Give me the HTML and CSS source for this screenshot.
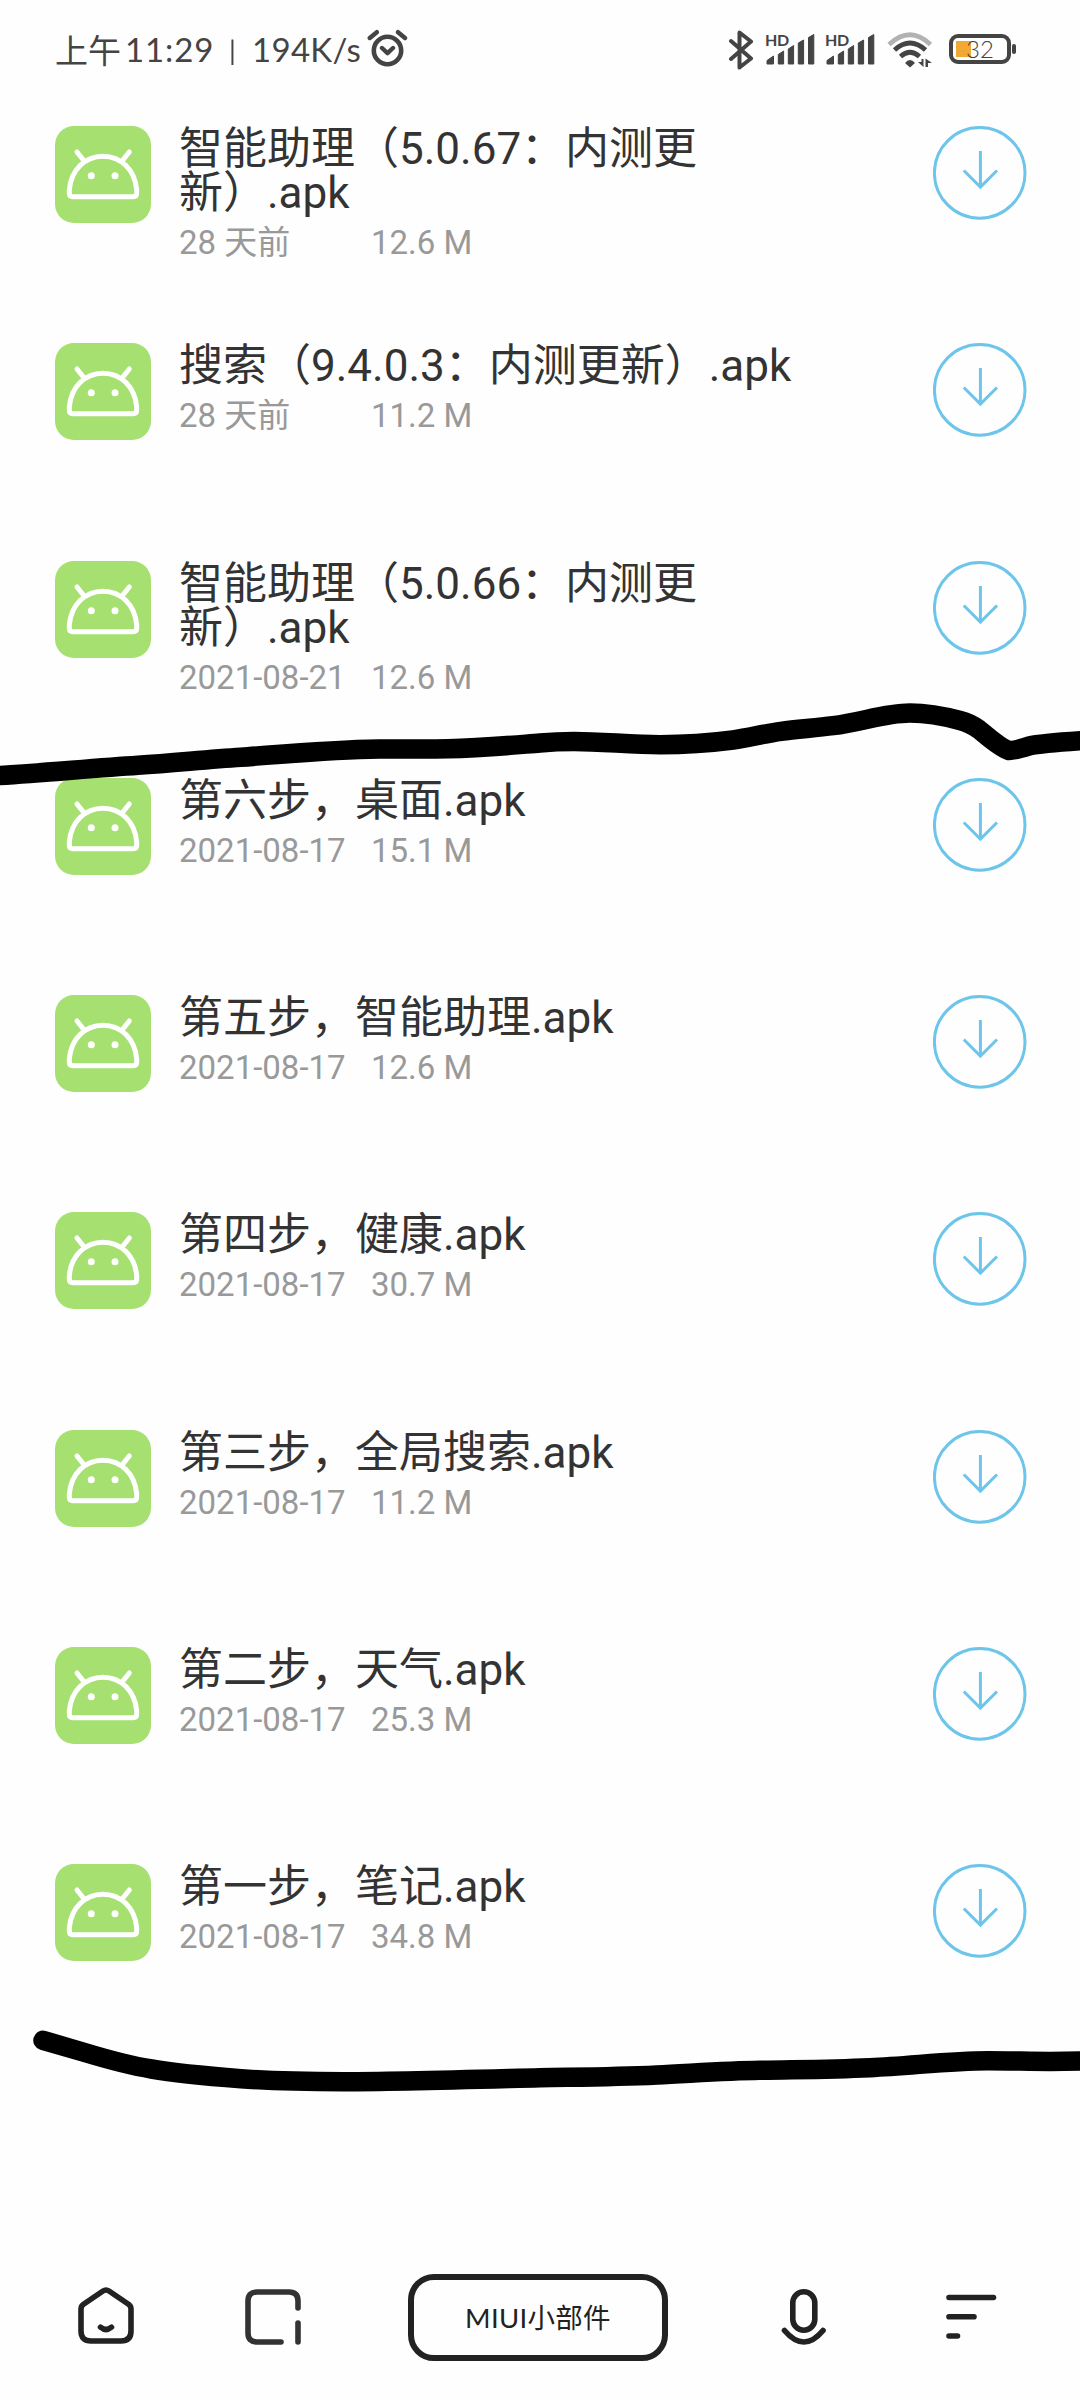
FILE: index.html
```html
<!DOCTYPE html>
<html lang="zh-CN">
<head>
<meta charset="utf-8">
<title>文件列表</title>
<link rel="stylesheet" href="styles.css">
</head>
<body>
<svg class="defs" width="0" height="0">
  <symbol id="android" viewBox="0 0 96 97">
    <path d="M14.300 64C16 44 30 30.200 48 30.200S80 44 81.700 64v3q0 3.700-3.700 3.700H18q-3.700 0-3.700-3.700zM22 26l7.200 9M74.300 26l-7.200 9" fill="none" stroke="#fff" stroke-width="5" stroke-linecap="round"/>
    <circle cx="36.300" cy="49.700" r="3.500" fill="#fff"/><circle cx="60" cy="49.700" r="3.500" fill="#fff"/>
  </symbol>
  <symbol id="download" viewBox="0 0 94 94">
    <circle cx="46.700" cy="46.900" r="45.300"/><path d="M47.400 25v36.500M30.800 44.500l16.600 16.600 16.600-16.600"/>
  </symbol>
  <symbol id="signal" viewBox="0 0 50 32">
    <path d="M2 31V27.500L8.500 23V31zM13.300 31V21.500L18.600 18V31zM23.300 31V16L28.600 12.500V31zM33.300 31V10L38.600 7V31zM43.500 31V4.500L48.800 1.500V31z" stroke-width="1" stroke="#444" stroke-linejoin="round" fill="#444"/>
  </symbol>
</svg>

<div class="screen">
  <header class="status">
    <div class="clock"><span class="ampm">上午</span><span class="time">11:29</span><span class="bar">|</span><span class="speed">194K/s</span>
      <svg class="alarm" width="41" height="38" viewBox="0 0 41 38"><circle cx="20.500" cy="21.500" r="13.700" fill="none" stroke="#444" stroke-width="4.600"/><path d="M15 19l5.500 5.200L26 19M2.800 9l7-5.800M31 3.200l7 5.800" fill="none" stroke="#444" stroke-width="4.400" stroke-linecap="round" stroke-linejoin="round"/></svg>
    </div>
    <div class="indicators">
      <svg class="bluetooth" width="26" height="40" viewBox="0 0 26 40"><path d="M3 11l20 17.500-11.500 9V2.500l11.500 9L3 29" fill="none" stroke="#444" stroke-width="4" stroke-linecap="round" stroke-linejoin="round"/></svg>
      <div class="sim"><span class="hd">HD</span><svg width="50" height="32"><use href="#signal"/></svg></div>
      <div class="sim"><span class="hd">HD</span><svg width="50" height="32"><use href="#signal"/></svg></div>
      <svg class="wifi" width="48" height="38" viewBox="0 0 48 38" fill="none">
        <path d="M3 13.500Q24-6 44.500 13.500" stroke="#b2b2b2" stroke-width="4.600"/>
        <path d="M8.500 19Q24 5 39.500 19M14.500 25.500Q24 17 33.500 25.500" stroke="#444" stroke-width="4.800"/>
        <path d="M19 32q5-6 10 0l-5 4.500zM32 31h3.500v-3h2V36zM39.500 36v-8.500l6.500 4.500h-4v4z" fill="#444"/>
      </svg>
      <div class="battery"><span>32</span></div>
    </div>
  </header>

  <main class="files">
    <article class="file"><svg class="thumb"><use href="#android"/></svg><div class="info"><h2>智能助理（5.0.67：内测更<br>新）.apk</h2><p><span>28 天前</span><span>12.6 M</span></p></div><svg class="get"><use href="#download"/></svg></article>
    <article class="file"><svg class="thumb"><use href="#android"/></svg><div class="info"><h2>搜索（9.4.0.3：内测更新）.apk</h2><p><span>28 天前</span><span>11.2 M</span></p></div><svg class="get"><use href="#download"/></svg></article>
    <article class="file"><svg class="thumb"><use href="#android"/></svg><div class="info"><h2>智能助理（5.0.66：内测更<br>新）.apk</h2><p><span>2021-08-21</span><span>12.6 M</span></p></div><svg class="get"><use href="#download"/></svg></article>
    <article class="file"><svg class="thumb"><use href="#android"/></svg><div class="info"><h2>第六步，桌面.apk</h2><p><span>2021-08-17</span><span>15.1 M</span></p></div><svg class="get"><use href="#download"/></svg></article>
    <article class="file"><svg class="thumb"><use href="#android"/></svg><div class="info"><h2>第五步，智能助理.apk</h2><p><span>2021-08-17</span><span>12.6 M</span></p></div><svg class="get"><use href="#download"/></svg></article>
    <article class="file"><svg class="thumb"><use href="#android"/></svg><div class="info"><h2>第四步，健康.apk</h2><p><span>2021-08-17</span><span>30.7 M</span></p></div><svg class="get"><use href="#download"/></svg></article>
    <article class="file"><svg class="thumb"><use href="#android"/></svg><div class="info"><h2>第三步，全局搜索.apk</h2><p><span>2021-08-17</span><span>11.2 M</span></p></div><svg class="get"><use href="#download"/></svg></article>
    <article class="file"><svg class="thumb"><use href="#android"/></svg><div class="info"><h2>第二步，天气.apk</h2><p><span>2021-08-17</span><span>25.3 M</span></p></div><svg class="get"><use href="#download"/></svg></article>
    <article class="file"><svg class="thumb"><use href="#android"/></svg><div class="info"><h2>第一步，笔记.apk</h2><p><span>2021-08-17</span><span>34.8 M</span></p></div><svg class="get"><use href="#download"/></svg></article>
  </main>

  <nav class="toolbar">
    <svg class="home" width="56" height="58" viewBox="0 0 56 58"><path d="M3 22q0-3 2.500-4.800L25 4q3-2 6 0l19.500 13.200Q53 19 53 22v22q0 10-10 10H13Q3 54 3 44zM22.500 40.200q5.500 4.600 11 0" fill="none" stroke="#222" stroke-width="5.600" stroke-linecap="round" stroke-linejoin="round"/></svg>
    <svg class="tabs" width="56" height="56" viewBox="0 0 56 56"><path d="M36 53H12q-9 0-9-9V12q0-9 9-9h32q9 0 9 9v7M53 34v19" fill="none" stroke="#333" stroke-width="5.600" stroke-linecap="round"/></svg>
    <button class="query">MIUI小部件</button>
    <svg class="mic" width="46" height="56" viewBox="0 0 46 56"><rect x="11.800" y="2.800" width="22" height="38.500" rx="11" fill="none" stroke="#222" stroke-width="5.600"/><path d="M3.500 41.500q19.500 23 38.500 0" fill="none" stroke="#222" stroke-width="5.600" stroke-linecap="round"/></svg>
    <svg class="menu" width="51" height="46" viewBox="0 0 51 46"><path d="M3 3.500h44.500M3 22.800h25M3 42h8.500" fill="none" stroke="#222" stroke-width="5.600" stroke-linecap="round"/></svg>
  </nav>

  <svg class="strokes" width="1080" height="2400" viewBox="0 0 1080 2400">
    <path d="M-12 776.300C30 774 90 768.500 138 765.300C175 763 205 759.500 241 757.300C285 754 330 749.700 379 749C402 748.700 425 749.300 448 748.700C485 748 520 744.500 540 743C551 742 562 741.500 574 741.500C603 741.500 630 744.700 660 744.700C685 744.700 710 743 733 740C750 737.500 765 733.500 781 731.300C798 729 816 728 833 725.700C862 722 885 713 910 713C928 713 947 717 960 720.500Q970 723 979 729.500C987 736 1000 748 1009 750.500Q1013 751 1029 746Q1042 743 1092 740"/>
    <path d="M43 2040.300L83 2052Q126 2065 151.500 2069Q180 2074 241 2078.700Q280 2081.700 344 2081.700C395 2081.700 470 2079.500 540 2077.700C585 2077 615 2077 657 2075C690 2073.500 725 2070.900 760 2070.300C800 2069.500 830 2069.500 870 2067.700C910 2066 950 2060.700 988 2060.700C1010 2060.700 1030 2061.500 1050 2061.500L1092 2060.700"/>
  </svg>
</div>
</body>
</html>
```
FILE: styles.css
```css
* { box-sizing: border-box; }
body { margin: 0; background: #fefefe; font-family: Roboto, "Noto Sans CJK SC", sans-serif; }
.defs { position: absolute; }
.screen { position: relative; width: 1080px; height: 2400px; overflow: hidden; display: flex; flex-direction: column; }

.status { height: 126px; padding: 27px 63px 0 55px; display: flex; justify-content: space-between; align-items: flex-start; color: #444; }
.clock { display: flex; align-items: center; height: 44px; font-family: Lato, "Noto Sans CJK SC", sans-serif; font-size: 33px; white-space: nowrap; }
.ampm { width: 70px; font-weight: 400; font-size: 33px; }
.time { width: 104px; letter-spacing: .9px; }
.bar { width: 23px; font-size: 27px; }
.speed { width: 115px; letter-spacing: .3px; }
.alarm { margin: -2px 0 0 0; }
.indicators { display: flex; align-items: flex-start; }
.bluetooth { margin: 3px 11px 0 0; }
.sim { display: grid; width: 60px; padding-top: 6px; }
.sim > * { grid-area: 1 / 1; }
.hd { font: 700 16px/14px Lato, sans-serif; letter-spacing: -.4px; }
.wifi { margin: 4px 15px 0 1px; }
.battery { position: relative; width: 62px; height: 30px; margin: 7px 6px 0 0; border: 4.500px solid #444; border-radius: 9px; color: #444; font: 300 24px/22px Lato, sans-serif; background: linear-gradient(#f2a933, #f2a933) 2.500px center / 15px 16px no-repeat; padding-left: 13px; }
.battery::after { content: ""; position: absolute; left: 59px; top: 6px; width: 4px; height: 10px; background: #444; border-radius: 2px; }

.files { flex: 1; display: flex; flex-direction: column; }
.file { height: 217.25px; padding: 0 53px 0 55px; display: flex; align-items: flex-start; }
.thumb { width: 96px; height: 97px; border-radius: 19px; background: #a5e070; flex: none; }
.info { flex: 1; padding: 1px 0 0 28px; }
.info h2 { margin: 0; font-size: 44px; line-height: 44px; font-weight: 400; color: #333; white-space: nowrap; }
.info p { margin: 0; padding-top: 3px; display: flex; font-size: 33px; line-height: 50px; color: #999; }
.info p span:first-child { width: 192px; }
.get { width: 94px; height: 94px; flex: none; fill: none; stroke: #6dc5ea; stroke-width: 3; }

.toolbar { height: 160px; padding: 34px 83px 0 78px; display: flex; align-items: flex-start; }
.home { margin-top: 13px; }
.tabs { margin: 15px 0 0 111px; }
.query { width: 260px; height: 87px; margin-left: 107px; padding: 0; border: 6px solid #222; border-radius: 26px; background: none; color: #222; font: 400 27.500px/1 Lato, "Noto Sans CJK SC", sans-serif; letter-spacing: .3px; }
.mic { margin: 15px 0 0 113px; }
.menu { margin: 20px 0 0 119px; }

.strokes { position: absolute; inset: 0; fill: none; stroke: #000; stroke-width: 19.500; stroke-linecap: round; stroke-linejoin: round; pointer-events: none; }
```
